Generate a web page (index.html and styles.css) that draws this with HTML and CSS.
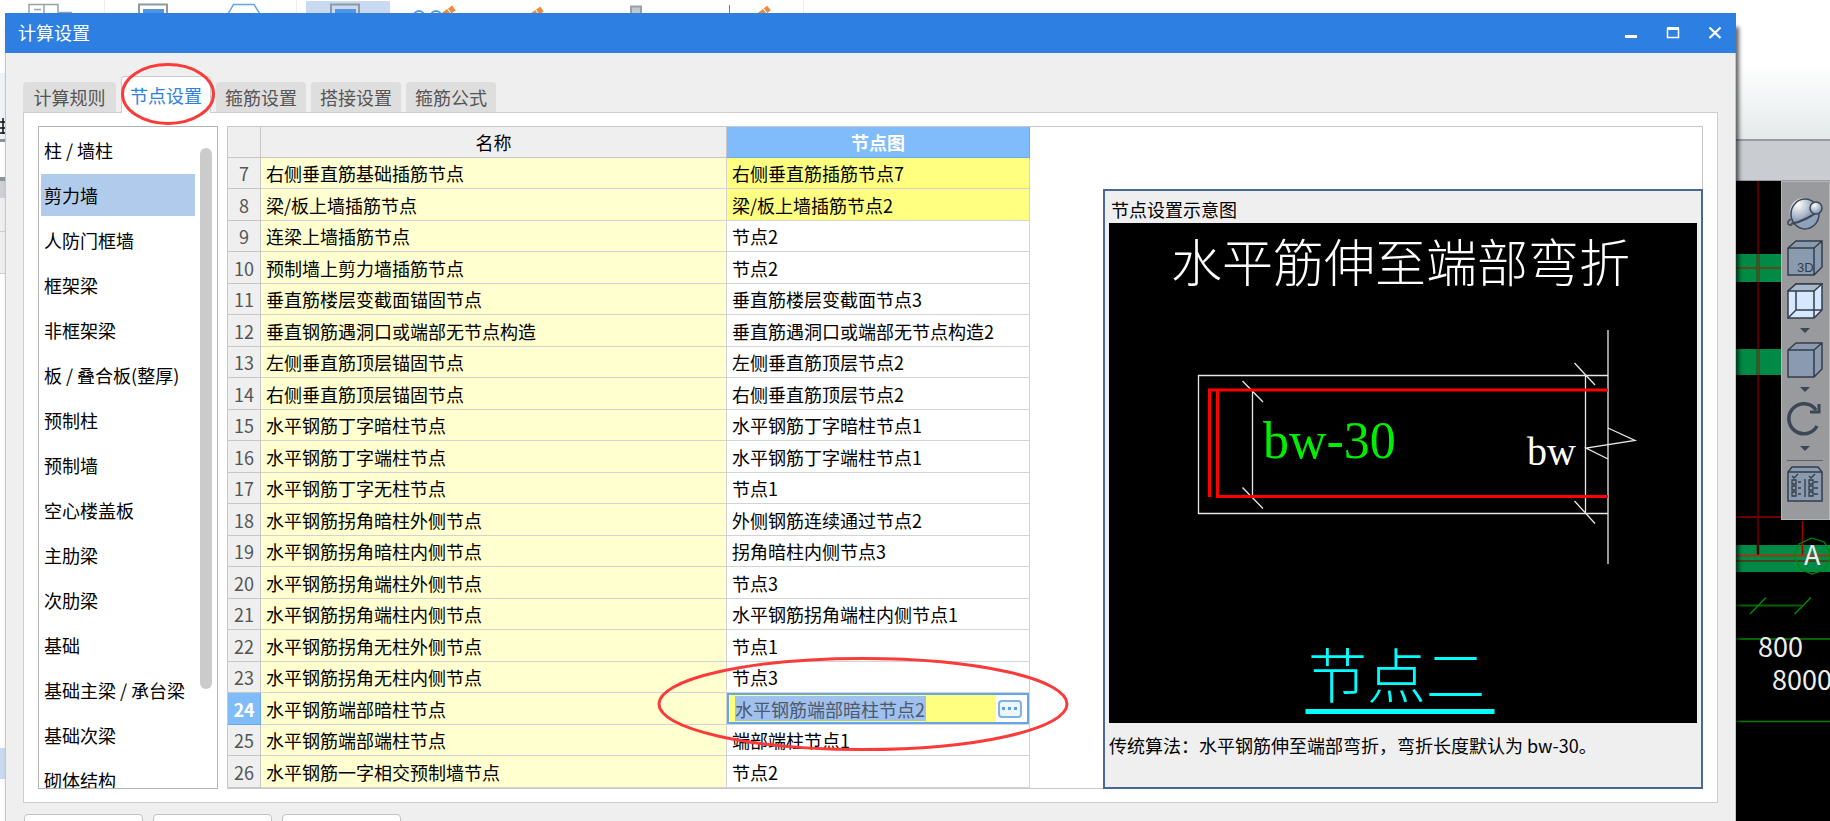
FILE: index.html
```html
<!DOCTYPE html>
<html lang="zh-CN">
<head>
<meta charset="utf-8">
<title>计算设置</title>
<link rel="stylesheet" href="styles.css">
</head>
<body>
<div class="app">
  <div class="ribbon">
    <svg width="820" height="13" viewBox="0 0 820 13" fill="none" aria-hidden="true">
      <path d="M104.500 0V13M296.500 0V13M803.500 0V13" stroke="#ececec"/>
      <path d="M29 14V4.500H58V14M44 4V14M34 9.500H41M58 12.500H72" stroke="#98a2a8" stroke-width="1.500"/>
      <path d="M139 14V4.500H167V14" stroke="#8e9aa2" stroke-width="2"/><path d="M143 9H164V14H143Z" fill="#5095e2"/>
      <path d="M228 14L233.500 4.500H254L260 14" stroke="#6ba4e6" stroke-width="1.500"/>
      <path d="M306 1H390V13H306Z" fill="#c9daf0"/>
      <path d="M331 14V4.500H359V14" stroke="#8e9aa2" stroke-width="2"/><path d="M335 9H356V14H335Z" fill="#5095e2"/>
      <circle cx="419" cy="16" r="5" stroke="#5b9bd0" stroke-width="2"/><circle cx="436" cy="16" r="5" stroke="#5b9bd0" stroke-width="2"/>
      <path d="M444 15L454 8" stroke="#f08a3c" stroke-width="6" stroke-dasharray="6 1"/>
      <path d="M532 16L542 9" stroke="#f08a3c" stroke-width="6" stroke-dasharray="6 1"/>
      <path d="M631 14V6.500H641V14" fill="#c0c8cb" stroke="#98a2a8" stroke-width="2"/>
      <path d="M729.500 5V13" stroke="#3d86dc"/>
      <path d="M760 15L769 8" stroke="#f08a3c" stroke-width="6" stroke-dasharray="6 1"/>
    </svg>
  </div>

  <div class="edge">
    <svg width="5" height="808" viewBox="0 0 5 808" aria-hidden="true">
      <path d="M0 60H5V126H0Z" fill="#eef3f5"/>
      <path d="M0 109H5M0 115H5M3 105V121M0 120H5" stroke="#111" stroke-width="1.500"/>
      <path d="M0 126H5V129H0Z" fill="#8f949a"/><path d="M0 164H5V168H0Z" fill="#8f949a"/>
      <path d="M0 168H5V185H0Z" fill="#cfd0d6"/><path d="M0 185H5V260H0Z" fill="#efefef"/>
      <path d="M0 218.500H5M0 260.500H5" stroke="#cfcfcf"/>
      <path d="M0 735H5V766H0Z" fill="#c9daf0"/>
    </svg>
  </div>

  <main class="dialog">
    <header class="titlebar">
      <h1>计算设置</h1>
      <div class="winbtns">
        <button aria-label="最小化"><svg width="14" height="14" viewBox="0 0 14 14"><path d="M1 9H13V12H1Z" fill="#fff"/></svg></button>
        <button aria-label="最大化"><svg width="14" height="14" viewBox="0 0 14 14"><path d="M1.500 2V11.500H12.500V2" fill="none" stroke="#fff" stroke-width="1.500"/><path d="M1 1H13V4H1Z" fill="#fff"/></svg></button>
        <button aria-label="关闭"><svg width="14" height="14" viewBox="0 0 14 14"><path d="M1.500 1.500L12.500 12M12.500 1.500L1.500 12" stroke="#fff" stroke-width="2.200"/></svg></button>
      </div>
    </header>

    <nav class="tabs">
      <button class="tab first">计算规则</button>
      <button class="tab active">节点设置
        <svg class="ring ring-tab" width="96" height="66" viewBox="0 0 96 66" aria-hidden="true"><ellipse cx="48" cy="33" rx="45.500" ry="29.500"/></svg>
      </button>
      <button class="tab">箍筋设置</button>
      <button class="tab">搭接设置</button>
      <button class="tab">箍筋公式</button>
    </nav>

    <section class="panel">
      <aside class="sidebar">
        <ul>
          <li>柱 / 墙柱</li><li class="selected">剪力墙</li><li>人防门框墙</li><li>框架梁</li><li>非框架梁</li>
          <li>板 / 叠合板(整厚)</li><li>预制柱</li><li>预制墙</li><li>空心楼盖板</li><li>主肋梁</li>
          <li>次肋梁</li><li>基础</li><li>基础主梁 / 承台梁</li><li>基础次梁</li><li>砌体结构</li>
        </ul>
        <div class="thumb"></div>
      </aside>

      <div class="sheet">
        <table class="grid">
          <thead><tr><th class="num"></th><th class="name">名称</th><th class="node">节点图</th></tr></thead>
          <tbody>
            <tr class="changed"><th>7</th><td>右侧垂直筋基础插筋节点</td><td>右侧垂直筋插筋节点7</td></tr>
            <tr class="changed"><th>8</th><td>梁/板上墙插筋节点</td><td>梁/板上墙插筋节点2</td></tr>
            <tr><th>9</th><td>连梁上墙插筋节点</td><td>节点2</td></tr>
            <tr><th>10</th><td>预制墙上剪力墙插筋节点</td><td>节点2</td></tr>
            <tr><th>11</th><td>垂直筋楼层变截面锚固节点</td><td>垂直筋楼层变截面节点3</td></tr>
            <tr><th>12</th><td>垂直钢筋遇洞口或端部无节点构造</td><td>垂直筋遇洞口或端部无节点构造2</td></tr>
            <tr><th>13</th><td>左侧垂直筋顶层锚固节点</td><td>左侧垂直筋顶层节点2</td></tr>
            <tr><th>14</th><td>右侧垂直筋顶层锚固节点</td><td>右侧垂直筋顶层节点2</td></tr>
            <tr><th>15</th><td>水平钢筋丁字暗柱节点</td><td>水平钢筋丁字暗柱节点1</td></tr>
            <tr><th>16</th><td>水平钢筋丁字端柱节点</td><td>水平钢筋丁字端柱节点1</td></tr>
            <tr><th>17</th><td>水平钢筋丁字无柱节点</td><td>节点1</td></tr>
            <tr><th>18</th><td>水平钢筋拐角暗柱外侧节点</td><td>外侧钢筋连续通过节点2</td></tr>
            <tr><th>19</th><td>水平钢筋拐角暗柱内侧节点</td><td>拐角暗柱内侧节点3</td></tr>
            <tr><th>20</th><td>水平钢筋拐角端柱外侧节点</td><td>节点3</td></tr>
            <tr><th>21</th><td>水平钢筋拐角端柱内侧节点</td><td>水平钢筋拐角端柱内侧节点1</td></tr>
            <tr><th>22</th><td>水平钢筋拐角无柱外侧节点</td><td>节点1</td></tr>
            <tr><th>23</th><td>水平钢筋拐角无柱内侧节点</td><td>节点3</td></tr>
            <tr class="editing"><th>24</th><td>水平钢筋端部暗柱节点</td><td class="editcell">
              <div class="editor"><div class="field"><input type="text" aria-label="节点图" value="水平钢筋端部暗柱节点2"></div>
              <button class="more" aria-label="更多"><svg width="16" height="4" viewBox="0 0 16 4"><path d="M0 0H3V3H0ZM6 0H9V3H6ZM12 0H15V3H12Z" fill="#5b9fe0"/></svg></button></div>
              <svg class="ring ring-cell" width="414" height="98" viewBox="0 0 414 98" aria-hidden="true"><ellipse cx="207" cy="49" rx="204" ry="45.500"/></svg>
            </td></tr>
            <tr><th>25</th><td>水平钢筋端部端柱节点</td><td>端部端柱节点1</td></tr>
            <tr><th>26</th><td>水平钢筋一字相交预制墙节点</td><td>节点2</td></tr>
          </tbody>
        </table>

        <figure class="preview">
          <h2>节点设置示意图</h2>
          <svg class="drawing" viewBox="1109 224 588 500" role="img" aria-label="节点二">
            <g fill="none" stroke="#e8e8e8" stroke-width="1.300">
              <path d="M1608 376.500H1198.500V514.500H1608M1608 331V565"/>
              <path d="M1252.500 391V498M1242.500 382L1263 403M1242.500 488.500L1263 509.500"/>
              <path d="M1585.500 376V515M1574.500 364L1595 386M1574.500 502L1595 524.500"/>
              <path d="M1608 429L1635 441.500L1586 449L1608 460"/>
            </g>
            <path d="M1209.500 498V391H1608M1217.500 391V497.500H1608" fill="none" stroke="#f00" stroke-width="3"/>
            <text class="cad" x="1171" y="283" font-size="51" fill="#fff">水平筋伸至端部弯折</text>
            <text class="cad latin" x="1263" y="459" font-size="52" fill="#0e0">bw-30</text>
            <text class="cad latin" x="1527" y="466" font-size="40" fill="#fff">bw</text>
            <text class="cad" x="1308" y="699" font-size="59" fill="#0ff">节点二</text>
            <path d="M1305.500 710H1494.500V715H1305.500Z" fill="#0ff"/>
          </svg>
          <figcaption>传统算法：水平钢筋伸至端部弯折，弯折长度默认为 bw-30。</figcaption>
        </figure>
      </div>
    </section>

    <footer class="actions"><button aria-label="导入规则"></button><button aria-label="导出规则"></button><button aria-label="恢复默认"></button></footer>
  </main>

  <aside class="right">
    <div class="sky"></div>
    <div class="bar"></div>
    <div class="canvas">
      <svg class="plan" width="94" height="640" viewBox="1736 181 94 640">
        <path d="M1736 254H1781V282H1736ZM1736 349H1781V375H1736ZM1736 545H1830V572H1736Z" fill="#008a45"/>
        <path d="M1736 268H1781" stroke="#5c4a1e" stroke-width="2"/>
        <path d="M1758 181V555" stroke="#4a0000" stroke-width="2.500"/>
        <path d="M1758 254V282M1758 349V375" stroke="#44531f" stroke-width="2.500"/>
        <path d="M1736 517H1781" stroke="#700000" stroke-width="2"/>
        <path d="M1802.500 521V555" stroke="#a00000" stroke-width="1.500"/>
        <path d="M1736 555.500H1830" stroke="#a5301c" stroke-width="2"/><path d="M1736 561H1830" stroke="#5c2a14" stroke-width="1.500"/>
        <path d="M1812 538L1824 542L1829 550V561L1824 570L1812 574L1800 569L1794 556L1799 544Z" fill="none" stroke="#008a00" stroke-width="1.300"/>
        <path d="M1736 605.500H1802M1736 639H1830" stroke="#006400" stroke-width="2"/>
        <path d="M1750 614L1766 597.500M1794.500 614L1811 597.500" stroke="#008a00" stroke-width="1.500"/>
        <path d="M1736 721.500H1830" stroke="#008000" stroke-width="1.500"/>
        <g class="dims" fill="#eee"><text x="1804" y="565" font-size="27">A</text><text x="1758" y="657" font-size="27">800</text><text x="1772" y="690" font-size="27">8000</text></g>
      </svg>
      <div class="tools">
        <button aria-label="动态观察"><svg width="36" height="36" viewBox="0 0 36 36" stroke="#3c4654" stroke-width="1.500">
          <defs><radialGradient id="ball" cx="35%" cy="25%" r="75%"><stop offset="0" stop-color="#fff"/><stop offset="1" stop-color="#8094ae"/></radialGradient></defs>
          <path d="M5 22C0 23 -1 29 5 28" fill="none"/>
          <ellipse cx="18" cy="17" rx="14" ry="15" fill="#8ea1b8" stroke="none"/>
          <path d="M6 26A14 15 0 1 1 27 6C27 13 18 21 6 26Z" fill="url(#ball)" stroke="none"/>
          <ellipse cx="18" cy="17" rx="14" ry="15" fill="none"/>
          <path d="M4 27C14 25 26 19 32 13" fill="none" stroke-width="2"/>
          <circle cx="29" cy="11" r="6" fill="url(#ball)"/></svg></button>
        <button aria-label="三维"><svg width="36" height="36" viewBox="0 0 36 36" stroke="#333d4a" stroke-width="1.500" fill="#8a9bb0"><path d="M1 8L9 1H35V27L27 35H1ZM1 8H27V35M27 8L35 1"/><text class="cube-label" x="10" y="32" font-size="13" stroke="none" fill="#333d4a">3D</text></svg></button>
        <button aria-label="线框"><svg width="36" height="36" viewBox="0 0 36 36" stroke="#333d4a" stroke-width="1.500" fill="#d6e8ff"><path d="M1 8L9 1H35V27L27 35H1Z"/><path d="M1 8L9 1H35L27 8Z" fill="#a9b8ca"/><path d="M27 8V35M9 8V27L1 35M9 27H35" fill="none"/></svg></button>
        <button class="drop" aria-label="线框选项"><svg width="10" height="9" viewBox="0 0 10 9"><path d="M0 2H10L5 7Z" fill="#3c4654"/></svg></button>
        <button aria-label="实体"><svg width="36" height="36" viewBox="0 0 36 36" stroke="#333d4a" stroke-width="1.500" fill="#8a9bb0"><path d="M1 8L9 1H35V27L27 35H1ZM1 8H27V35M27 8L35 1"/></svg></button>
        <button class="drop" aria-label="实体选项"><svg width="10" height="9" viewBox="0 0 10 9"><path d="M0 2H10L5 7Z" fill="#3c4654"/></svg></button>
        <button aria-label="旋转"><svg width="36" height="36" viewBox="0 0 36 36" fill="none" stroke="#3c4654" stroke-width="3.500"><path d="M30 25A15 15 0 1 1 29 9"/><path d="M32 3V11H23" stroke-width="3"/></svg></button>
        <button class="drop" aria-label="旋转选项"><svg width="10" height="9" viewBox="0 0 10 9"><path d="M0 2H10L5 7Z" fill="#3c4654"/></svg></button>
        <hr>
        <button aria-label="显示设置"><svg width="36" height="36" viewBox="0 0 36 36" stroke="#333d4a" stroke-width="1.500" fill="#8a9bb0"><path d="M1 6L5 1H31L35 6V35H1ZM1 6H35"/><g fill="none" stroke-width="1.300"><path d="M5 10L7 12L11 8M22 10L24 12L28 8M18 13V31M11 16H14M11 22H14M11 28H14M27 16H31M27 22H31M27 28H31"/><path d="M5 14H9V18H5ZM5 20H9V24H5ZM5 26H9V30H5ZM22 14H26V18H22ZM22 20H26V24H22ZM22 26H26V30H22Z"/></g></svg></button>
      </div>
    </div>
  </aside>
</div>
</body>
</html>
```
FILE: styles.css
```css
* { box-sizing: border-box; }

body {
  margin: 0;
  background: #fff;
  color: #000;
  font: 18px/24px "Noto Sans CJK SC", sans-serif;
}

button { padding: 0; border: 0; background: none; color: inherit; font: inherit; }
svg { display: block; }
h1, h2, figure, ul { margin: 0; padding: 0; font-size: 18px; font-weight: 400; }

.app {
  display: grid;
  grid-template: 13px minmax(0, 1fr) / 5px minmax(0, 1fr) 94px;
  height: 100vh;
  overflow: hidden;
}
.ribbon { grid-column: 1 / -1; overflow: hidden; }
.edge { overflow: hidden; }

.dialog {
  z-index: 1;
  display: flex;
  flex-direction: column;
  border: solid #b9c8dc;
  border-width: 0 1px;
  background: #efefef;
  box-shadow: 3px 14px 4px rgba(0, 0, 0, .6);
}
.titlebar {
  flex: none;
  display: flex;
  align-items: center;
  justify-content: space-between;
  height: 40px;
  margin: 0 -1px;
  padding: 0 14px 0 13px;
  background: #2d7fe1;
  color: #fff;
}
.titlebar h1 { line-height: 22px; padding-bottom: 2px; }
.winbtns { display: flex; gap: 28px; }

.tabs {
  flex: none;
  display: flex;
  align-items: flex-end;
  gap: 5px;
  height: 59px;
  padding: 0 17px;
}
.tab {
  width: 90px;
  height: 30px;
  border-radius: 4px 4px 0 0;
  background: #dedede;
  color: #555;
}
.tab.first { width: 93px; }
.tab.active {
  position: relative;
  z-index: 1;
  height: 37px;
  margin-bottom: -1px;
  border: 1px solid #c9ced3;
  border-bottom: 0;
  background: #fff;
  color: #2d7fe1;
}
.ring { position: absolute; fill: none; stroke: #fb3a3a; stroke-width: 3px; pointer-events: none; }
.ring-tab { top: -16px; left: -2px; }
.ring-cell { top: -38px; left: -71px; }

.panel {
  flex: none;
  display: flex;
  gap: 9px;
  margin: 0 17px;
  padding: 13px 14px;
  border: 1px solid #c9ced3;
  background: #fff;
}
.sidebar {
  contain: size;
  position: relative;
  flex: none;
  width: 180px;
  overflow: hidden;
  border: 1px solid #b4b4b4;
}
.sidebar ul { padding: 2px; list-style: none; }
.sidebar li { width: 154px; height: 42px; margin-bottom: 3px; padding-left: 3px; line-height: 42px; white-space: nowrap; }
.sidebar .selected { background: #b1cbed; }
.thumb { position: absolute; top: 21px; right: 5px; width: 12px; height: 541px; border-radius: 6px; background: #cbcbcb; }

.sheet { flex: 1; display: flex; justify-content: space-between; border: 1px solid #c8c8c8; }
.grid { flex: none; width: 802px; border-spacing: 0; table-layout: fixed; line-height: 24px; }
.grid th, .grid td {
  height: 31px;
  padding: 0 5px;
  border: solid #d3d3d3;
  border-width: 0 1px 1px 0;
  text-align: left;
  font-weight: 400;
  white-space: nowrap;
}
.grid tr:nth-child(even) td { height: 32px; }
.grid .num { width: 33px; }
.grid .name { width: 466px; }
.grid th { border-color: #c6c6c6; background: #efefef; text-align: center; }
.grid tbody th { padding: 0; color: #555; }
.grid td:nth-child(2) { background: #ffffcf; }
.grid .changed td:nth-child(3) { background: #ffff80; }
.grid thead .node, .grid .editing th { border-color: #6aaae8; background: #80bbfb; color: #fff; font-weight: 700; }
.grid .editcell { position: relative; padding: 0; }
.editor { display: flex; align-items: center; gap: 2px; height: 31px; padding: 0 5px 0 1px; border: 2px solid #64a6e6; background: #fff; }
.field { flex: 1; height: 27px; padding: 1px 5px; background: #ffff80; }
.field input { display: block; width: 191px; height: 25px; padding: 0; border: 0; background: #a0c0ee; color: #4c5a6c; font: inherit; }
.more { display: grid; place-items: center; width: 24px; height: 18px; border: 2px solid #7db3e8; border-radius: 4px; background: #edf5fd; }

.preview {
  display: flex;
  flex-direction: column;
  width: 600px;
  margin: 62px -1px -1px 0;
  padding: 0 4px;
  border: 2px solid #4a6797;
  background: #efefef;
}
.preview h2 { height: 32px; padding-left: 2px; line-height: 36px; }
.drawing { flex: 1; width: 100%; min-height: 0; background: #000; }
.cad { font-family: "Noto Sans CJK SC", sans-serif; font-weight: 300; }
.cad.latin { font-family: "Liberation Serif", serif; }
.preview figcaption { height: 64px; padding-top: 10px; white-space: nowrap; }

.actions { flex: none; display: flex; gap: 10px; padding: 11px 18px; }
.actions button { width: 119px; height: 32px; border: 1px solid #c2c2c2; border-radius: 4px; background: #fff; }

.right { display: flex; flex-direction: column; }
.sky { flex: none; height: 126px; background: linear-gradient(#fff 40%, #e4eaeb); }
.bar { flex: none; height: 42px; border: solid #999c9f; border-width: 2px 0 1px; background: #c9ccd1; }
.canvas { position: relative; flex: 1; min-height: 0; overflow: hidden; background: #000; }
.dims { font-family: "Noto Sans CJK SC", sans-serif; }
.cube-label { font-family: "Liberation Sans", sans-serif; }
.tools {
  position: absolute;
  top: 0;
  right: 0;
  display: flex;
  flex-direction: column;
  gap: 7px;
  width: 49px;
  padding: 15px 7px 17px 5px;
  border: 1px solid #b5b6b8;
  background: #989a9e;
}
.tools .drop { align-self: center; }
.tools hr { width: 36px; height: 1px; margin: 0 0 -2px; border: 0; background: #5d6168; }
```
